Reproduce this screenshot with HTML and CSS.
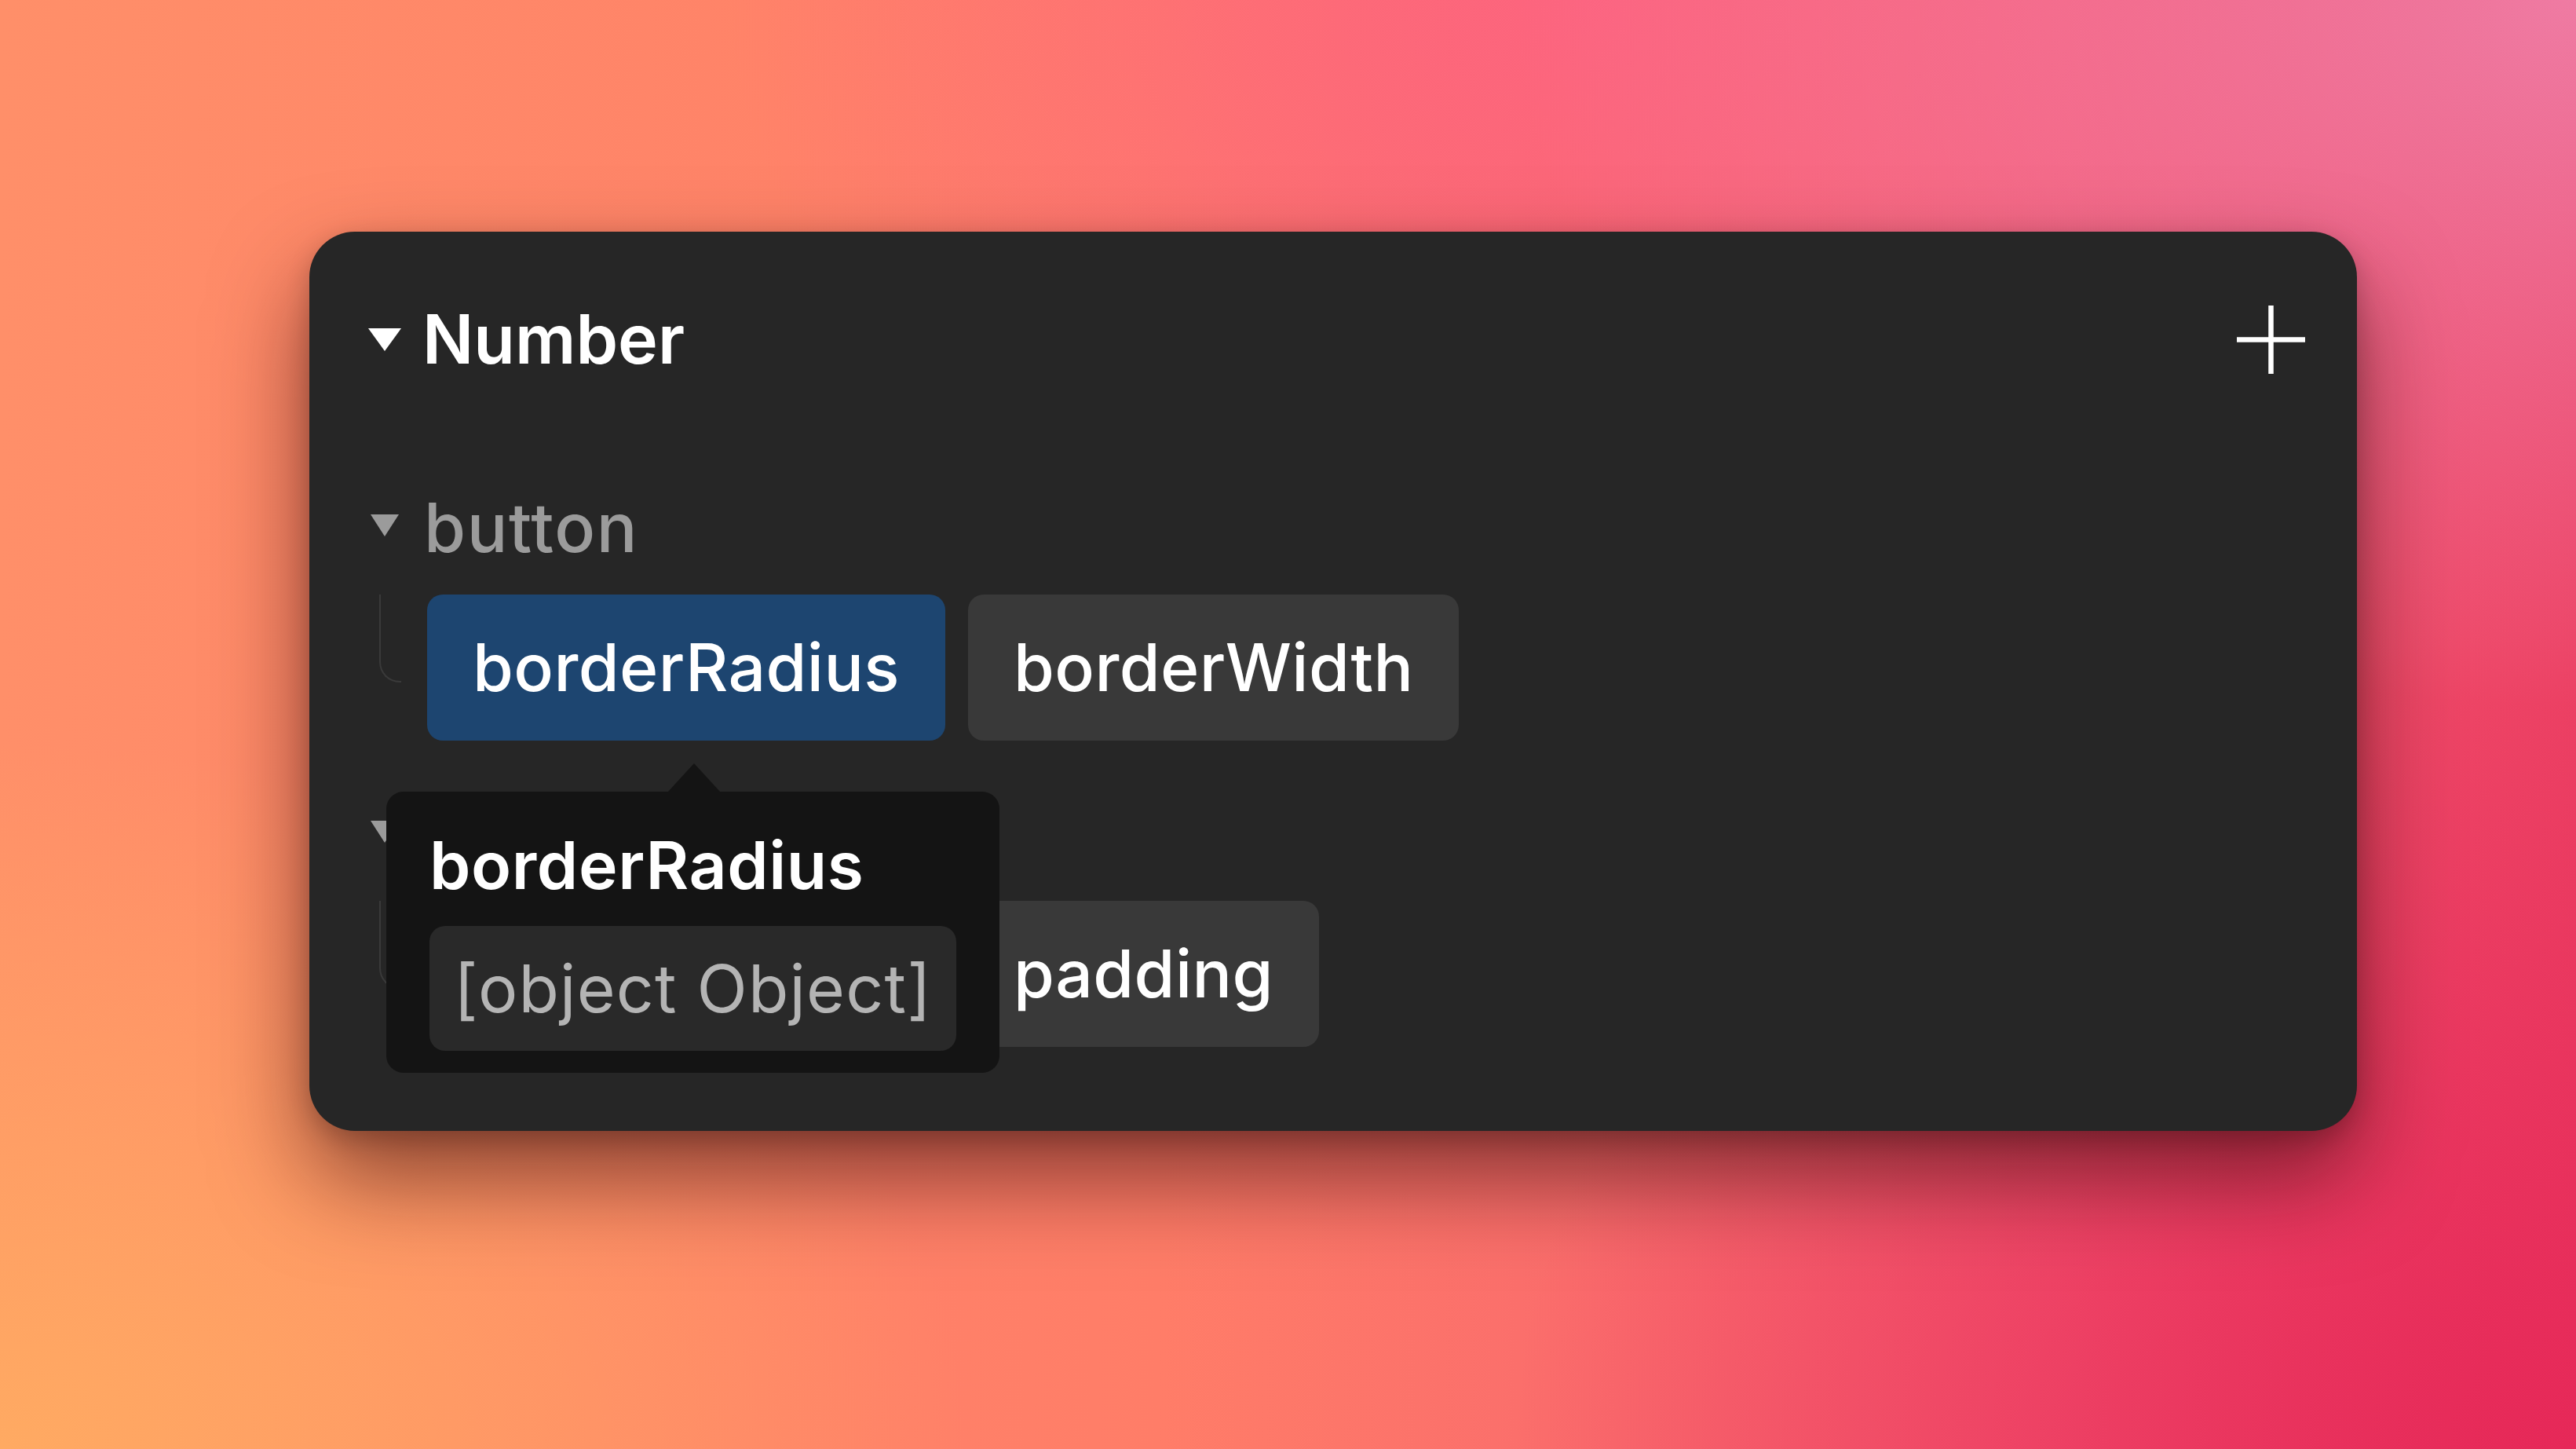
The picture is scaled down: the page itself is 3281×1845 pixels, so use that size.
FILE: index.html
```html
<!DOCTYPE html>
<html lang="en">
<head>
<meta charset="utf-8">
<title>Number tokens</title>
<link rel="stylesheet" href="styles.css">
</head>
<body>
  <section class="panel">
    <header class="header">
      <span class="caret-box"><span class="caret caret-lg"></span></span>
      <h1 class="title">Number</h1>
      <button class="add" aria-label="Add">
        <svg width="91" height="91" viewBox="0 0 91 91">
          <path d="M45.5 2 V89 M2 45.5 H89" stroke="#ffffff" stroke-width="6.5" fill="none"/>
        </svg>
      </button>
    </header>

    <div class="group group-first">
      <div class="group-head">
        <span class="caret-box"><span class="caret caret-sm"></span></span>
        <span class="group-name">button</span>
      </div>
      <div class="group-body">
        <span class="branch"></span>
        <div class="chips">
          <div class="chip-wrap">
            <span class="chip chip-active">borderRadius</span>
            <div class="tooltip">
              <div class="tooltip-title">borderRadius</div>
              <div class="tooltip-value">[object Object]</div>
            </div>
          </div>
          <span class="chip">borderWidth</span>
        </div>
      </div>
    </div>

    <div class="group group-next">
      <div class="group-head">
        <span class="caret-box"><span class="caret caret-sm"></span></span>
        <span class="group-name">input</span>
      </div>
      <div class="group-body">
        <span class="branch"></span>
        <div class="chips">
          <span class="chip">borderRadius</span>
          <span class="chip">padding</span>
        </div>
      </div>
    </div>
  </section>
</body>
</html>
```

FILE: styles.css
```css
html, body {
  margin: 0;
  padding: 0;
}

body {
  width: 3281px;
  height: 1845px;
  box-sizing: border-box;
  padding: 295px 0 0 394px;
  overflow: hidden;
  font-family: "Inter", "Noto Sans", sans-serif;
  background:
    radial-gradient(ellipse 55% 65% at 100% 0%, rgba(239, 126, 166, 0.95), rgba(239, 126, 166, 0) 75%),
    radial-gradient(ellipse 45% 55% at 62% 0%, rgba(253, 98, 130, 0.85), rgba(253, 98, 130, 0) 75%),
    radial-gradient(ellipse 55% 75% at 100% 100%, rgba(230, 40, 88, 1), rgba(230, 40, 88, 0) 75%),
    radial-gradient(ellipse 50% 65% at 0% 100%, rgba(255, 170, 98, 1), rgba(255, 170, 98, 0) 75%),
    linear-gradient(90deg, #ff8f69 0%, #ff7d68 45%, #f55a70 80%, #ec4264 100%);
}

.panel {
  width: 2608px;
  height: 1145px;
  box-sizing: border-box;
  padding: 85px 64px 0 70px;
  background: #262626;
  border-radius: 58px;
  box-shadow: 0 60px 120px rgba(50, 8, 8, 0.58), 0 10px 30px rgba(0, 0, 0, 0.2);
}

.header {
  display: flex;
  align-items: center;
  height: 104px;
}

.caret-box {
  width: 52px;
  display: flex;
  justify-content: center;
  align-items: center;
  flex: none;
}

.caret {
  width: 0;
  height: 0;
  display: block;
}

.caret-lg {
  border-left: 21px solid transparent;
  border-right: 21px solid transparent;
  border-top: 29px solid #ffffff;
}

.caret-sm {
  border-left: 18px solid transparent;
  border-right: 18px solid transparent;
  border-top: 28px solid #9b9b9b;
  margin-top: -6px;
}

.title {
  margin: 0 0 0 22px;
  font-size: 86px;
  line-height: 104px;
  font-weight: 600;
  color: #ffffff;
}

.add {
  margin-left: auto;
  padding: 0;
  border: 0;
  background: none;
  width: 91px;
  height: 91px;
  display: flex;
}

.group-first {
  margin-top: 136px;
}

.group-next {
  margin-top: 67px;
}

.group-head {
  display: flex;
  align-items: center;
  height: 104px;
}

.group-name {
  margin-left: 24px;
  font-size: 86px;
  line-height: 104px;
  font-weight: 500;
  letter-spacing: 1.5px;
  color: #9b9b9b;
}

.group-body {
  display: flex;
  align-items: flex-start;
  margin-top: 33px;
}

.branch {
  flex: none;
  width: 26px;
  height: 110px;
  margin-left: 19px;
  border-left: 2px solid #3a3a3a;
  border-bottom: 2px solid #3a3a3a;
  border-bottom-left-radius: 26px;
}

.chips {
  display: flex;
  gap: 29px;
  margin-left: 33px;
}

.chip-wrap {
  position: relative;
  display: flex;
}

.chip {
  display: block;
  height: 186px;
  box-sizing: border-box;
  padding: 42px 58px;
  border-radius: 20px;
  background: #393939;
  color: #ffffff;
  font-size: 84px;
  line-height: 102px;
  font-weight: 500;
  letter-spacing: 0.4px;
  white-space: nowrap;
}

.chip-active {
  background: #1d4570;
}

.tooltip {
  position: absolute;
  left: -52px;
  top: 251px;
  z-index: 2;
  padding: 43px 55px 28px;
  background: #141414;
  border-radius: 22px;
  white-space: nowrap;
}

.tooltip::before {
  content: "";
  position: absolute;
  top: -36px;
  left: 358px;
  border-left: 34px solid transparent;
  border-right: 34px solid transparent;
  border-bottom: 37px solid #141414;
}

.tooltip-title {
  font-size: 84px;
  line-height: 101px;
  font-weight: 600;
  letter-spacing: 0.6px;
  color: #ffffff;
}

.tooltip-value {
  margin-top: 27px;
  padding: 29px 31px;
  background: #292929;
  border-radius: 20px;
  font-size: 84px;
  line-height: 101px;
  font-weight: 400;
  letter-spacing: 1.2px;
  color: #b4b4b4;
}
```
